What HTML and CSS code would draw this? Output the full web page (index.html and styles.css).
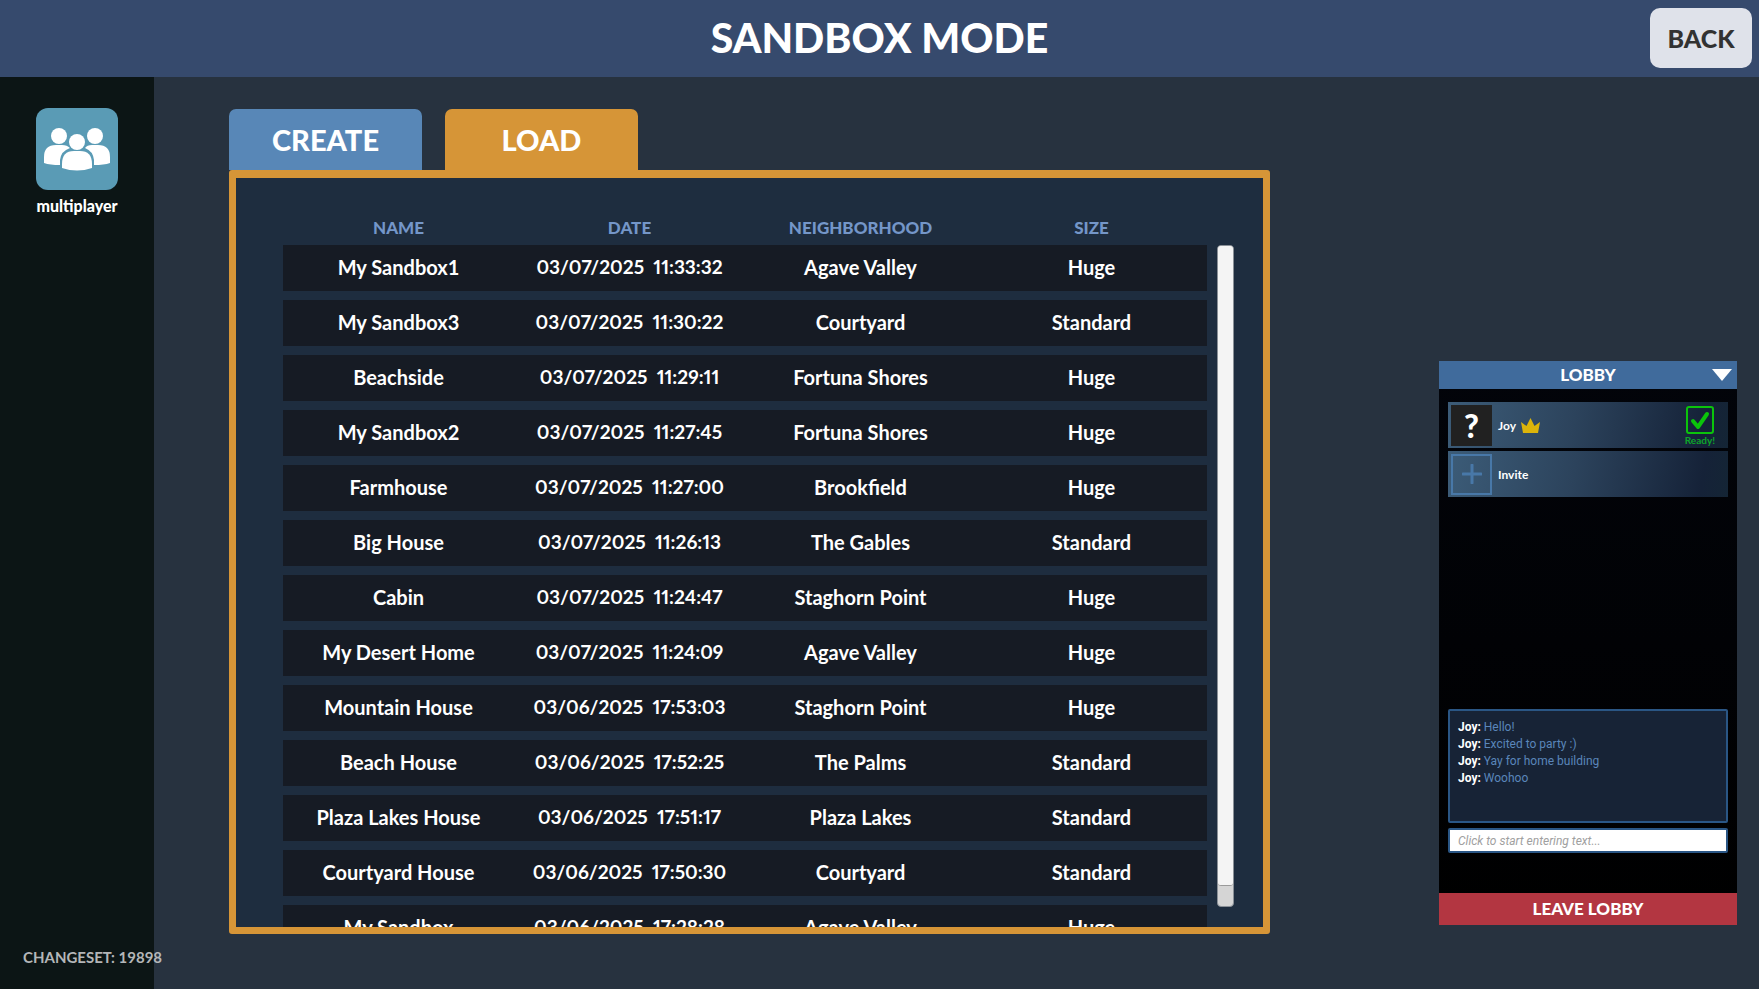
FILE: index.html
```html
<!DOCTYPE html>
<html lang="en">
<head>
<meta charset="utf-8">
<title>Sandbox Mode</title>
<link rel="stylesheet" href="styles.css">
</head>
<body>
<header class="topbar">
  <h1 class="title">SANDBOX MODE</h1>
  <button class="back" type="button">BACK</button>
</header>
<div class="body">
  <nav class="sidebar">
    <button class="mode" type="button">
      <span class="mode-icon">
        <svg viewBox="0 0 82 82" width="82" height="82" aria-hidden="true">
          <g fill="#fff">
            <circle cx="23" cy="28" r="8"/>
            <circle cx="59" cy="28" r="8"/>
            <path d="M8 55V49Q8 37 20 37H26Q31 37 34 40Q25 43 24 52V57Q14 57 8 55Z"/>
            <path d="M74 55V49Q74 37 62 37H56Q51 37 49 40Q57 43 58 52V57Q68 57 74 55Z"/>
          </g>
          <g fill="#fff" stroke="#5a9bb5" stroke-width="2" paint-order="stroke">
            <circle cx="41" cy="34" r="8"/>
            <path d="M26 60V56Q26 43 38 43H44Q56 43 56 56V60Q41 65 26 60Z"/>
          </g>
        </svg>
      </span>
      <span class="mode-name">multiplayer</span>
    </button>
  </nav>
  <main class="saves">
    <div class="tabs" role="tablist">
      <button class="tab" type="button" role="tab" aria-selected="false">CREATE</button>
      <button class="tab tab-active" type="button" role="tab" aria-selected="true">LOAD</button>
    </div>
    <section class="panel">
      <div class="list">
        <table class="table">
          <thead><tr><th>NAME</th><th>DATE</th><th>NEIGHBORHOOD</th><th>SIZE</th></tr></thead>
          <tbody>
            <tr><td>My Sandbox1</td><td class="date">03/07/2025  11:33:32</td><td>Agave Valley</td><td>Huge</td></tr>
            <tr><td>My Sandbox3</td><td class="date">03/07/2025  11:30:22</td><td>Courtyard</td><td>Standard</td></tr>
            <tr><td>Beachside</td><td class="date">03/07/2025  11:29:11</td><td>Fortuna Shores</td><td>Huge</td></tr>
            <tr><td>My Sandbox2</td><td class="date">03/07/2025  11:27:45</td><td>Fortuna Shores</td><td>Huge</td></tr>
            <tr><td>Farmhouse</td><td class="date">03/07/2025  11:27:00</td><td>Brookfield</td><td>Huge</td></tr>
            <tr><td>Big House</td><td class="date">03/07/2025  11:26:13</td><td>The Gables</td><td>Standard</td></tr>
            <tr><td>Cabin</td><td class="date">03/07/2025  11:24:47</td><td>Staghorn Point</td><td>Huge</td></tr>
            <tr><td>My Desert Home</td><td class="date">03/07/2025  11:24:09</td><td>Agave Valley</td><td>Huge</td></tr>
            <tr><td>Mountain House</td><td class="date">03/06/2025  17:53:03</td><td>Staghorn Point</td><td>Huge</td></tr>
            <tr><td>Beach House</td><td class="date">03/06/2025  17:52:25</td><td>The Palms</td><td>Standard</td></tr>
            <tr><td>Plaza Lakes House</td><td class="date">03/06/2025  17:51:17</td><td>Plaza Lakes</td><td>Standard</td></tr>
            <tr><td>Courtyard House</td><td class="date">03/06/2025  17:50:30</td><td>Courtyard</td><td>Standard</td></tr>
            <tr><td>My Sandbox</td><td class="date">03/06/2025  17:28:28</td><td>Agave Valley</td><td>Huge</td></tr>
          </tbody>
        </table>
      </div>
      <div class="track"><div class="thumb"></div></div>
    </section>
  </main>
  <aside class="lobby">
    <div class="lobby-head">
      <h2 class="lobby-title">LOBBY</h2>
      <button class="collapse" type="button" aria-label="Collapse lobby">
        <svg viewBox="0 0 20 12" width="20" height="12" aria-hidden="true"><path d="M0 0H20L10 12Z" fill="#fff"/></svg>
      </button>
    </div>
    <div class="players">
      <div class="player">
        <span class="avatar">?</span>
        <span>Joy</span>
        <svg viewBox="0 0 19 15" width="19" height="15" aria-hidden="true"><path d="M2 15L0 4L5.500 8L9.500 0L13.500 8L19 4L17 15Z" fill="#dcb40a"/></svg>
        <span class="ready">
          <svg viewBox="0 0 28 28" width="28" height="28" aria-hidden="true" fill="none" stroke="#0bc40b"><rect x="1" y="1" width="26" height="26" rx="2" stroke-width="2"/><path d="M7 15L12 21L21 8" stroke-width="4" stroke-linecap="round" stroke-linejoin="round"/></svg>
          <span>Ready!</span>
        </span>
      </div>
      <button class="player" type="button">
        <span class="avatar avatar-add">
          <svg viewBox="0 0 20 20" width="20" height="20" aria-hidden="true"><path d="M10 1V19M1 10H19" stroke="#4878a8" stroke-width="3" stroke-linecap="round"/></svg>
        </span>
        <span>Invite</span>
      </button>
    </div>
    <div class="chat">
      <p class="line"><b>Joy:</b> Hello!</p>
      <p class="line"><b>Joy:</b> Excited to party :)</p>
      <p class="line"><b>Joy:</b> Yay for home building</p>
      <p class="line"><b>Joy:</b> Woohoo</p>
    </div>
    <input class="entry" type="text" aria-label="Chat message" placeholder="Click to start entering text...">
    <button class="leave" type="button">LEAVE LOBBY</button>
  </aside>
</div>
<p class="changeset">CHANGESET: 19898</p>
</body>
</html>
```

FILE: styles.css
```css
* { box-sizing: border-box; }
body {
  margin: 0;
  height: 100vh;
  display: flex;
  flex-direction: column;
  overflow: hidden;
  background: #27323f;
  color: #fff;
  font-family: Lato, "Open Sans", sans-serif;
  font-weight: 700;
}
button {
  border: 0;
  padding: 0;
  background: none;
  color: inherit;
  font: inherit;
  cursor: pointer;
}
h1, h2, p { margin: 0; }
svg { display: block; }

.topbar {
  display: grid;
  grid-template-columns: 1fr auto 1fr;
  align-items: center;
  height: 77px;
  flex: none;
  padding: 0 7px 2px;
  background: #364a6d;
}
.title {
  grid-column: 2;
  font-size: 41px;
  line-height: 48px;
  font-weight: 900;
}
.back {
  justify-self: end;
  width: 102px;
  height: 60px;
  border-radius: 10px;
  background: #dfe2ea;
  color: #323232;
  font-size: 25px;
  font-weight: 900;
}

.body {
  display: flex;
  flex: 1;
  min-height: 0;
}
.sidebar {
  width: 154px;
  flex: none;
  padding-top: 31px;
  background: #0c1515;
}
.mode {
  display: flex;
  flex-direction: column;
  align-items: center;
  gap: 7px;
  width: 100%;
}
.mode-icon {
  border-radius: 12px;
  background: #5a9bb5;
}
.mode-name {
  font-size: 16px;
  line-height: 18px;
  font-weight: 900;
}

.saves {
  display: flex;
  flex-direction: column;
  flex: 1;
  padding: 32px 0 55px 75px;
}
.tabs {
  display: flex;
  gap: 23px;
}
.tab {
  width: 193px;
  height: 61px;
  border-radius: 7px 7px 0 0;
  background: #5887b7;
  font-size: 29px;
  font-weight: 900;
}
.tab-active { background: #d69537; }
.panel {
  display: flex;
  gap: 10px;
  flex: 1;
  min-height: 0;
  padding: 32px 29px 0 47px;
  border: 7px solid #d69537;
  border-top-width: 8px;
  border-radius: 3px;
  background: #1e2d3f;
}
.list {
  flex: 1;
  overflow: hidden;
}
.table {
  width: 100%;
  table-layout: fixed;
  border-collapse: separate;
  border-spacing: 0 9px;
  text-align: center;
  white-space: pre;
}
.table th {
  height: 17px;
  padding: 0;
  color: #7496c8;
  font-size: 17px;
  line-height: 17px;
  font-weight: 900;
}
.table td {
  height: 46px;
  padding: 0 0 2px;
  background: #161b24;
  font-size: 20px;
  line-height: 24px;
}
.table .date {
  font-size: 19px;
  font-variant-numeric: proportional-nums;
}
.track {
  width: 17px;
  margin: 35px 0 20px;
  border: 1px solid #8a9097;
  border-radius: 4px;
  background: #d5d5d5;
}
.thumb {
  height: 97%;
  border-bottom: 1px solid #9a9a9a;
  border-radius: 3px;
  background: #f4f4f4;
}

.lobby {
  display: flex;
  flex-direction: column;
  align-self: flex-end;
  flex: none;
  width: 298px;
  height: 564px;
  margin: 0 22px 64px 169px;
  background: linear-gradient(#02040a, #000);
}
.lobby-head {
  display: grid;
  grid-template-columns: 1fr auto 1fr;
  align-items: center;
  height: 28px;
  padding: 0 5px;
  background: #406b9c;
}
.lobby-title {
  grid-column: 2;
  font-size: 17px;
  line-height: 20px;
  font-weight: 900;
}
.collapse { justify-self: end; }
.players {
  display: flex;
  flex-direction: column;
  flex: 1;
  gap: 3px;
  padding: 13px 9px;
}
.player {
  display: flex;
  align-items: center;
  gap: 5px;
  height: 46px;
  padding: 0 13px 0 3px;
  background: linear-gradient(100deg, #3c5c78, #2c435c 45%, #152238 90%, #142535);
  font-size: 12px;
}
.avatar {
  display: grid;
  place-items: center;
  width: 41px;
  height: 41px;
  margin-right: 1px;
  background: #212121;
  font-size: 32px;
  font-weight: 900;
}
.avatar-add {
  border: 2px solid #4878a8;
  background: none;
}
.ready {
  display: flex;
  flex-direction: column;
  align-items: center;
  margin-left: auto;
  padding-top: 2px;
  color: #0da52a;
  font-size: 10px;
  line-height: 12px;
}
.chat {
  height: 114px;
  margin: 0 9px;
  padding: 8px;
  border: 2px solid #2a5685;
  border-radius: 2px;
  background: #172336;
}
.line {
  color: #5a86ba;
  font: 12px/17px Roboto, "Liberation Sans", sans-serif;
}
.line b { color: #fff; }
.entry {
  height: 25px;
  margin: 5px 9px 40px;
  padding: 0 8px;
  border: 2px solid #2a5685;
  border-radius: 2px;
  background: #fff;
  font: italic 12px Roboto, "Liberation Sans", sans-serif;
}
.entry::placeholder { color: #a0a0a0; }
.leave {
  height: 32px;
  padding-bottom: 2px;
  background: #b33641;
  font-size: 17px;
  font-weight: 900;
}
.changeset {
  position: absolute;
  left: 23px;
  bottom: 22px;
  color: #b4b6b8;
  font-size: 15px;
  line-height: 20px;
}
```
